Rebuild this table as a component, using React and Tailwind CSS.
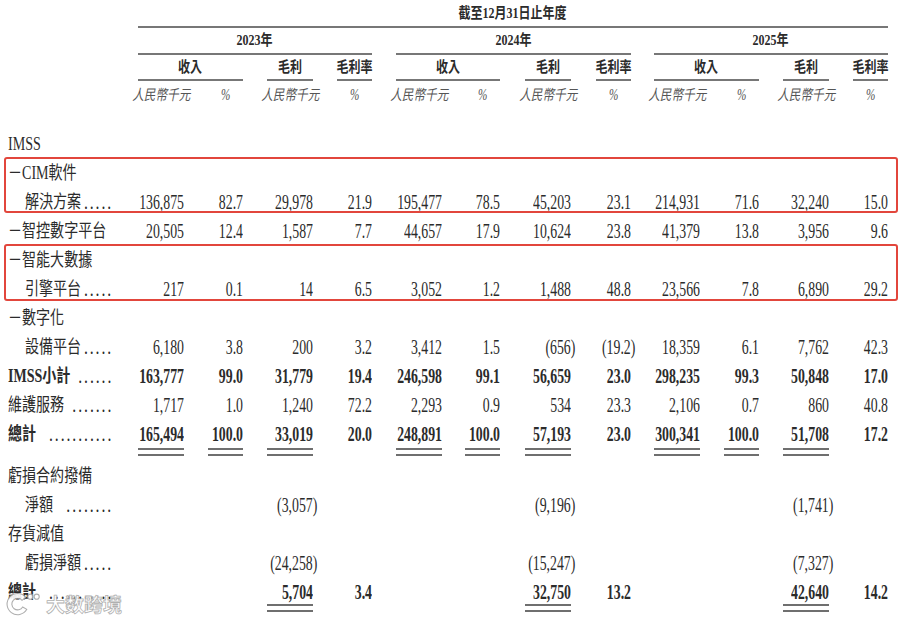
import React from "react";

const GRID =
  "grid grid-cols-[138px_46px_59px_70px_59px_70px_58px_71px_60px_69px_59px_70px_59px]";

// r = 人民幣千元 column, p = % column
const KINDS = ["r", "p", "r", "p", "r", "p", "r", "p", "r", "p", "r", "p"];

function Head({ children }) {
  return (
    <span className="inline-block shrink-0 origin-center scale-x-[0.8] whitespace-nowrap text-[15px] font-bold leading-none text-[#2b2b2b]">
      {children}
    </span>
  );
}

function Box({ kind, line, children }) {
  return (
    <div className="flex justify-end">
      <div
        className={
          (kind === "r" ? "w-[46px] " : "w-[35px] ") +
          (line
            ? "flex h-full items-center justify-center border-b-2 border-[#777]"
            : "flex h-full items-center justify-center")
        }
      >
        {children}
      </div>
    </div>
  );
}

function Num({ v }) {
  const neg = v.startsWith("(");
  return (
    <span
      className={
        neg
          ? "-mr-[4px] inline-block shrink-0 origin-right scale-x-[0.69] whitespace-nowrap text-[20px] leading-none"
          : "inline-block shrink-0 origin-right scale-x-[0.69] whitespace-nowrap text-[20px] leading-none"
      }
    >
      {v}
    </span>
  );
}

function Label({ children, indent, dots }) {
  return (
    <div className={indent ? "pl-[25px]" : "pl-[8px]"}>
      <div
        className={
          indent
            ? "flex w-[113px] origin-left scale-x-[0.78] items-center text-[18px] leading-none"
            : "flex w-[135px] origin-left scale-x-[0.78] items-center text-[18px] leading-none"
        }
      >
        <span className="shrink-0 whitespace-nowrap">{children}</span>
        {dots ? (
          <span className="flex flex-1 justify-end text-[20px] font-normal">
            <span className="whitespace-nowrap tracking-[2.5px]">{".".repeat(dots)}</span>
          </span>
        ) : null}
      </div>
    </div>
  );
}

function Row({ label, indent, dots, bold, values }) {
  return (
    <div className={`${GRID} h-[29px] items-center ${bold ? "font-bold" : ""}`}>
      <Label indent={indent} dots={dots}>
        {label}
      </Label>
      {values
        ? values.map((v, i) => (
            <div key={i} className="flex justify-end">
              {v ? <Num v={v} /> : null}
            </div>
          ))
        : null}
    </div>
  );
}

function DoubleLine({ cols, className = "" }) {
  return (
    <div className={`${GRID} h-[13px] items-start ${className}`}>
      <div />
      {KINDS.map((k, i) => (
        <div key={i} className="flex justify-end">
          {cols.includes(i) ? (
            <div
              className={
                k === "r"
                  ? "h-[8px] w-[46px] border-y-2 border-[#6f6f6f]"
                  : "h-[8px] w-[35px] border-y-2 border-[#6f6f6f]"
              }
            />
          ) : null}
        </div>
      ))}
    </div>
  );
}

function Boxed({ children, bottom }) {
  return (
    <div className="relative">
      {children}
      <div
        className={
          bottom === 3
            ? "pointer-events-none absolute -top-px bottom-[3px] left-[4px] right-[2px] rounded-[3px] border-2 border-[#e2463c]"
            : "pointer-events-none absolute -top-px bottom-[2px] left-[4px] right-[2px] rounded-[3px] border-2 border-[#e2463c]"
        }
      />
    </div>
  );
}

export default function App() {
  return (
    <div className="relative h-[620px] w-[900px] overflow-hidden bg-white font-['Liberation_Serif','Noto_Sans_CJK_TC',serif] text-[#2b2b2b]">
      {/* Header */}
      <div className={`${GRID} h-[28px]`}>
        <div className="col-span-12 col-start-2 flex items-center justify-center border-b-2 border-[#777]">
          <Head>截至12月31日止年度</Head>
        </div>
      </div>

      <div className={`${GRID} h-[27px]`}>
        <div className="col-span-4 col-start-2 flex items-center justify-center border-b-2 border-[#777]">
          <Head>2023年</Head>
        </div>
        <div className="col-span-4 ml-[24px] flex items-center justify-center border-b-2 border-[#777]">
          <Head>2024年</Head>
        </div>
        <div className="col-span-4 ml-[23px] flex items-center justify-center border-b-2 border-[#777]">
          <Head>2025年</Head>
        </div>
      </div>

      <div className={`${GRID} h-[26px]`}>
        <div className="col-span-2 col-start-2 flex items-center justify-center border-b-2 border-[#777]">
          <Head>收入</Head>
        </div>
        <Box kind="r" line>
          <Head>毛利</Head>
        </Box>
        <Box kind="p" line>
          <Head>毛利率</Head>
        </Box>
        <div className="col-span-2 ml-[24px] flex items-center justify-center border-b-2 border-[#777]">
          <Head>收入</Head>
        </div>
        <Box kind="r" line>
          <Head>毛利</Head>
        </Box>
        <Box kind="p" line>
          <Head>毛利率</Head>
        </Box>
        <div className="col-span-2 ml-[23px] flex items-center justify-center border-b-2 border-[#777]">
          <Head>收入</Head>
        </div>
        <Box kind="r" line>
          <Head>毛利</Head>
        </Box>
        <Box kind="p" line>
          <Head>毛利率</Head>
        </Box>
      </div>

      <div className={`${GRID} h-[28px]`}>
        <div />
        {KINDS.map((k, i) => (
          <Box key={i} kind={k}>
            {k === "r" ? (
              <span className="inline-block shrink-0 origin-center scale-x-[0.8] whitespace-nowrap text-[14.5px] italic leading-none text-[#555]">
                人民幣千元
              </span>
            ) : (
              <span className="inline-block shrink-0 origin-center scale-x-[0.7] text-[16px] italic leading-none text-[#555]">
                %
              </span>
            )}
          </Box>
        ))}
      </div>

      {/* Body */}
      <div className="mt-[20px]">
        <Row label="IMSS" />
        <Boxed bottom={3}>
          <Row label="－CIM軟件" />
          <Row
            label="解決方案"
            indent
            dots={5}
            values={["136,875", "82.7", "29,978", "21.9", "195,477", "78.5", "45,203", "23.1", "214,931", "71.6", "32,240", "15.0"]}
          />
        </Boxed>
        <Row
          label="－智控數字平台"
          values={["20,505", "12.4", "1,587", "7.7", "44,657", "17.9", "10,624", "23.8", "41,379", "13.8", "3,956", "9.6"]}
        />
        <Boxed bottom={2}>
          <Row label="－智能大數據" />
          <Row
            label="引擎平台"
            indent
            dots={5}
            values={["217", "0.1", "14", "6.5", "3,052", "1.2", "1,488", "48.8", "23,566", "7.8", "6,890", "29.2"]}
          />
        </Boxed>
        <Row label="－數字化" />
        <Row
          label="設備平台"
          indent
          dots={5}
          values={["6,180", "3.8", "200", "3.2", "3,412", "1.5", "(656)", "(19.2)", "18,359", "6.1", "7,762", "42.3"]}
        />
        <Row
          label="IMSS小計"
          dots={6}
          bold
          values={["163,777", "99.0", "31,779", "19.4", "246,598", "99.1", "56,659", "23.0", "298,235", "99.3", "50,848", "17.0"]}
        />
        <Row
          label="維護服務"
          dots={7}
          values={["1,717", "1.0", "1,240", "72.2", "2,293", "0.9", "534", "23.3", "2,106", "0.7", "860", "40.8"]}
        />
        <Row
          label="總計"
          dots={11}
          bold
          values={["165,494", "100.0", "33,019", "20.0", "248,891", "100.0", "57,193", "23.0", "300,341", "100.0", "51,708", "17.2"]}
        />
        <DoubleLine cols={[0, 1, 2, 4, 5, 6, 8, 9, 10]} />

        <Row label="虧損合約撥備" />
        <Row
          label="淨額"
          indent
          dots={8}
          values={["", "", "(3,057)", "", "", "", "(9,196)", "", "", "", "(1,741)", ""]}
        />
        <Row label="存貨減值" />
        <Row
          label="虧損淨額"
          indent
          dots={5}
          values={["", "", "(24,258)", "", "", "", "(15,247)", "", "", "", "(7,327)", ""]}
        />
        <Row
          label="總計"
          dots={11}
          bold
          values={["", "", "5,704", "3.4", "", "", "32,750", "13.2", "", "", "42,640", "14.2"]}
        />
        <DoubleLine cols={[2, 6, 10]} className="-mt-[2px]" />
      </div>

      {/* Watermark */}
      <div className="pointer-events-none absolute left-[6px] top-[589px] flex items-center gap-[4px] opacity-90">
        <svg width="36" height="28" viewBox="0 0 34 26">
          <path
            d="M18.66 7.57 A10 10 0 1 0 19.66 19 L15.76 16.75 A5.5 5.5 0 1 1 15.21 10.46 Z"
            fill="#fff"
            stroke="#a5a5a5"
            strokeWidth="1"
          />
          <circle cx="23" cy="7" r="2.4" fill="#fff" stroke="#a5a5a5" strokeWidth="1" />
          <circle cx="29" cy="7" r="2.4" fill="#fff" stroke="#a5a5a5" strokeWidth="1" />
        </svg>
        <span className="font-['Noto_Sans_CJK_SC',sans-serif] text-[19px] font-bold leading-none text-white [-webkit-text-stroke:0.8px_#a8a8a8]">
          大数跨境
        </span>
      </div>
    </div>
  );
}
